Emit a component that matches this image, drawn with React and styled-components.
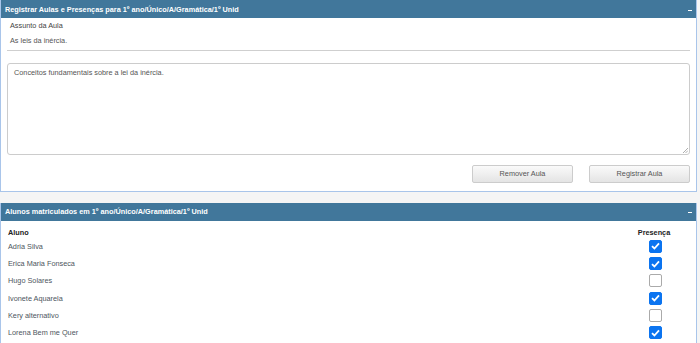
import React from "react"
import styled, { createGlobalStyle } from "styled-components"

const GlobalStyle = createGlobalStyle`
  html, body {
    margin: 0;
    padding: 0;
    background: #f5f5f5;
  }
  body {
    font-family: "Liberation Sans", Arial, sans-serif;
    font-size: 7.3px;
    color: #444;
  }
`

const Page = styled.div`
  padding: 0 3px 0 0;
  display: flex;
  flex-direction: column;
  gap: 11px;
`

const Panel = styled.section`
  background: #fff;
  border: 1px solid #a9c5ea;
  border-top: none;
`

const PanelHeader = styled.header`
  height: 18px;
  background: #41779b;
  color: #fff;
  font-weight: bold;
  font-size: 7.3px;
  display: flex;
  align-items: center;
  justify-content: space-between;
  padding: 0 4px 0 4px;
`

const Collapse = styled.span`
  width: 4px;
  height: 1px;
  background: #fff;
  margin-top: 2px;
`

const LessonBody = styled.div`
  padding: 1px 6px 8px 6px;
`

const Field = styled.div`
  padding: 0 3px;
  line-height: 14.8px;
  color: ${({ $muted }) => ($muted ? "#555" : "#444")};
`

const Divider = styled.hr`
  border: none;
  border-top: 1px solid #cfcfcf;
  margin: 1.5px 0 11.5px 0;
`

const Notes = styled.div`
  position: relative;
  height: 92px;
  border: 1px solid #ccc;
  border-radius: 3px;
  padding: 4px 6px;
  color: #555;
  box-sizing: border-box;
`

const Grip = styled.svg`
  position: absolute;
  right: 1px;
  bottom: 1px;
`

const Actions = styled.div`
  display: flex;
  justify-content: flex-end;
  gap: 16px;
  margin-top: 10px;
`

const Button = styled.button`
  width: 101px;
  height: 18px;
  font-family: inherit;
  font-size: 7.3px;
  color: #555;
  border: 1px solid #ccc;
  border-radius: 2px;
  background: linear-gradient(#fafafa, #e4e4e4);
  padding: 0;
`

const Roster = styled.div`
  display: grid;
  grid-template-columns: 1fr 34px;
  padding: 6px 25px 12px 7px;
  align-items: center;
`

const HeadCell = styled.div`
  font-weight: bold;
  color: #222;
  line-height: 11px;
  text-align: ${({ $center }) => ($center ? "center" : "left")};
`

const NameCell = styled.div`
  color: #4d5660;
  height: 17.3px;
  display: flex;
  align-items: center;
`

const CheckCell = styled.div`
  height: 17.3px;
  display: flex;
  align-items: center;
  justify-content: center;
  padding-left: 3px;
`

const Box = styled.span`
  width: 13px;
  height: 13px;
  box-sizing: border-box;
  border-radius: 2px;
  background: ${({ $on }) => ($on ? "#0b74f0" : "#fff")};
  border: 1px solid ${({ $on }) => ($on ? "#0b74f0" : "#aaa")};
  display: flex;
  align-items: center;
  justify-content: center;
`

const students = [
  { name: "Adria Silva", present: true },
  { name: "Erica Maria Fonseca", present: true },
  { name: "Hugo Solares", present: false },
  { name: "Ivonete Aquarela", present: true },
  { name: "Kery alternativo", present: false },
  { name: "Lorena Bem me Quer", present: true },
]

const Check = ({ on }) => (
  <Box $on={on}>
    {on && (
      <svg width="9" height="8" viewBox="0 0 9 8">
        <path d="M1 4.2 L3.4 6.5 L8 1.3" stroke="#fff" strokeWidth="1.8" fill="none" />
      </svg>
    )}
  </Box>
)

export default function App() {
  return (
    <>
      <GlobalStyle />
      <Page>
        <Panel>
          <PanelHeader>
            <span>Registrar Aulas e Presenças para 1º ano/Único/A/Gramática/1º Unid</span>
            <Collapse />
          </PanelHeader>
          <LessonBody>
            <Field>Assunto da Aula</Field>
            <Field $muted>As leis da inércia.</Field>
            <Divider />
            <Notes>
              Conceitos fundamentais sobre a lei da inércia.
              <Grip width="6" height="6" viewBox="0 0 6 6">
                <path d="M1 6 L6 1 M3.5 6 L6 3.5" stroke="#999" strokeWidth="0.8" />
              </Grip>
            </Notes>
            <Actions>
              <Button>Remover Aula</Button>
              <Button>Registrar Aula</Button>
            </Actions>
          </LessonBody>
        </Panel>
        <Panel>
          <PanelHeader>
            <span>Alunos matriculados em 1º ano/Único/A/Gramática/1º Unid</span>
            <Collapse />
          </PanelHeader>
          <Roster>
            <HeadCell>Aluno</HeadCell>
            <HeadCell $center>Presença</HeadCell>
            {students.map(s => (
              <React.Fragment key={s.name}>
                <NameCell>{s.name}</NameCell>
                <CheckCell>
                  <Check on={s.present} />
                </CheckCell>
              </React.Fragment>
            ))}
          </Roster>
        </Panel>
      </Page>
    </>
  )
}
